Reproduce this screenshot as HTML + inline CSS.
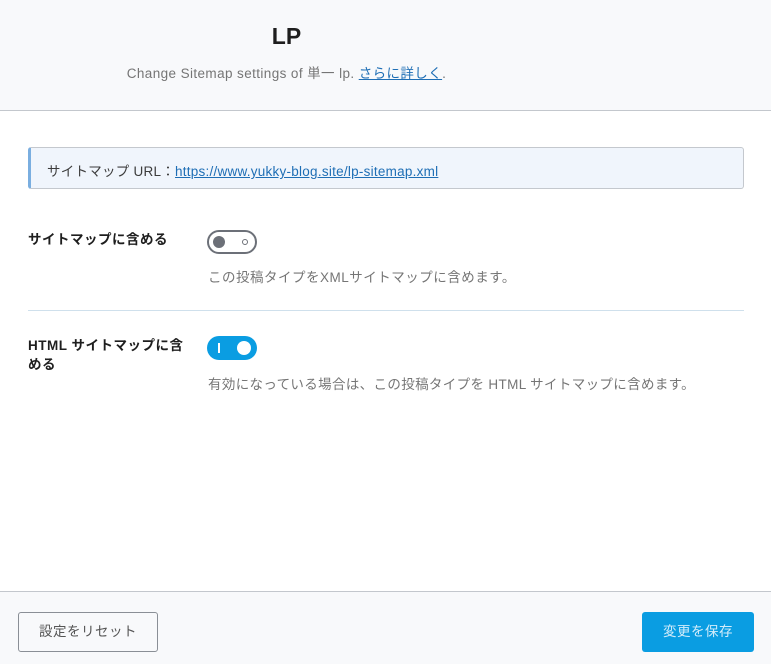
<!DOCTYPE html>
<html><head><meta charset="utf-8"><style>
*{box-sizing:border-box;margin:0;padding:0}
body{width:771px;height:664px;overflow:hidden;background:#fff;font-family:"Liberation Sans","Noto Sans CJK JP",sans-serif;position:relative;letter-spacing:0.5px}
.hd{position:absolute;left:0;top:0;width:771px;height:111px;background:#f8f9fb;border-bottom:1px solid #c3c7cd}
.t{position:absolute;left:0;width:573px;top:23px;text-align:center;font-size:23px;color:#1e1e1e;font-weight:bold;letter-spacing:0}
.s{position:absolute;left:0;width:573px;top:62px;text-align:center;font-size:13.5px;color:#757575;letter-spacing:0.4px}
a{color:#1e6eb5;text-decoration:underline}
.url{position:absolute;left:28px;top:147px;width:716px;height:42px;background:#f0f5fc;border:1px solid #c4c8ce;border-left:3px solid #7aaee0;border-radius:3px;font-size:13.5px;color:#3c3c3c;padding:12px 0 0 16px;letter-spacing:0.25px}
.lb{position:absolute;left:28px;font-size:13.5px;font-weight:bold;color:#1e1e1e;line-height:19px}
.ds{position:absolute;left:208px;font-size:13.5px;color:#757575}
.tg{position:absolute;left:207px;width:50px;height:24px;border-radius:12px}
.hr{position:absolute;left:28px;top:310px;width:716px;height:1px;background:#cfe0ec}
.ft{position:absolute;left:0;top:591px;width:771px;height:73px;background:#f8f9fb;border-top:1px solid #c3c7cd}
.b1{position:absolute;left:18px;top:612px;width:140px;height:40px;border:1px solid #8a8f96;border-radius:3px;background:#f8f9fb;font-size:13.5px;color:#555;text-align:center;line-height:38px}
.b2{position:absolute;left:642px;top:612px;width:112px;height:40px;border-radius:3px;background:#0a9de2;font-size:13.5px;color:#d2ecfa;text-align:center;line-height:40px}
</style></head><body>
<div class="hd"><div class="t">LP</div><div class="s">Change Sitemap settings of 単一 lp. <a>さらに詳しく</a>.</div></div>
<div class="url">サイトマップ URL：<a>https://www.yukky-blog.site/lp-sitemap.xml</a></div>
<div class="lb" style="top:230px">サイトマップに含める</div>
<div class="tg" style="top:230px;border:2px solid #6c7078;background:#fff"><div style="position:absolute;left:4px;top:4px;width:12px;height:12px;border-radius:50%;background:#6c7078"></div><div style="position:absolute;left:33px;top:7px;width:6px;height:6px;border-radius:50%;border:1.5px solid #6c7078"></div></div>
<div class="ds" style="top:266px">この投稿タイプをXMLサイトマップに含めます。</div>
<div class="hr"></div>
<div class="lb" style="top:336px;width:160px">HTML サイトマップに含める</div>
<div class="tg" style="top:336px;background:#0a9de2"><div style="position:absolute;left:11px;top:7px;width:2px;height:10px;background:#fff"></div><div style="position:absolute;left:30px;top:5px;width:14px;height:14px;border-radius:50%;background:#fff"></div></div>
<div class="ds" style="top:373px;letter-spacing:0.35px">有効になっている場合は、この投稿タイプを HTML サイトマップに含めます。</div>
<div class="ft"></div>
<div class="b1">設定をリセット</div>
<div class="b2">変更を保存</div>
</body></html>
